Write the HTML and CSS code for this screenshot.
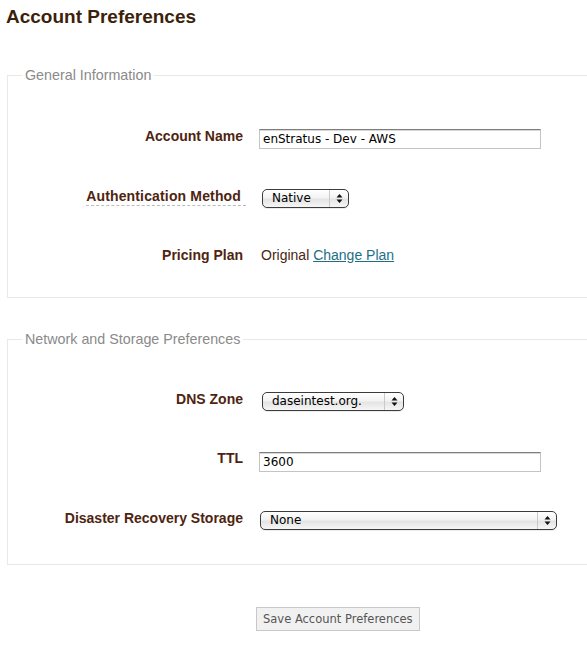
FILE: index.html
```html
<!DOCTYPE html>
<html>
<head>
<meta charset="utf-8">
<title>Account Preferences</title>
<link rel="stylesheet" href="styles.css">
</head>
<body>
<div class="page">
  <h1 class="title">Account Preferences</h1>

  <fieldset class="group">
    <legend class="group-legend">General Information</legend>
    <div class="rows">
      <div class="row">
        <label class="label">Account Name</label>
        <div class="control"><input class="text-input" type="text" value="enStratus - Dev - AWS"></div>
      </div>
      <div class="row">
        <label class="label"><span class="abbr">Authentication Method</span></label>
        <div class="control">
          <span class="select select-auth"><span class="select-value">Native</span><span class="select-arrows"><svg width="7" height="11" viewBox="0 0 7 11"><path d="M3.5 1 L6.5 4.5 L0.5 4.5 Z M3.5 10 L6.5 6.5 L0.5 6.5 Z" fill="#111"/></svg></span></span>
        </div>
      </div>
      <div class="row">
        <label class="label">Pricing Plan</label>
        <div class="plain">Original <a class="link" href="#">Change Plan</a></div>
      </div>
    </div>
  </fieldset>

  <fieldset class="group group-second">
    <legend class="group-legend">Network and Storage Preferences</legend>
    <div class="rows">
      <div class="row">
        <label class="label">DNS Zone</label>
        <div class="control">
          <span class="select select-dns"><span class="select-value">daseintest.org.</span><span class="select-arrows"><svg width="7" height="11" viewBox="0 0 7 11"><path d="M3.5 1 L6.5 4.5 L0.5 4.5 Z M3.5 10 L6.5 6.5 L0.5 6.5 Z" fill="#111"/></svg></span></span>
        </div>
      </div>
      <div class="row">
        <label class="label">TTL</label>
        <div class="control"><input class="text-input" type="text" value="3600"></div>
      </div>
      <div class="row">
        <label class="label">Disaster Recovery Storage</label>
        <div class="control">
          <span class="select select-dr"><span class="select-value">None</span><span class="select-arrows"><svg width="7" height="11" viewBox="0 0 7 11"><path d="M3.5 1 L6.5 4.5 L0.5 4.5 Z M3.5 10 L6.5 6.5 L0.5 6.5 Z" fill="#111"/></svg></span></span>
        </div>
      </div>
    </div>
  </fieldset>

  <div class="actions">
    <button class="button" type="button">Save Account Preferences</button>
  </div>
</div>
</body>
</html>
```

FILE: styles.css
```css
html, body {
  margin: 0;
  padding: 0;
  background: #fff;
}
body {
  font-family: "Liberation Sans", Arial, sans-serif;
  color: #4a2511;
}
.page {
  padding: 6px 0 0 6px;
}
.title {
  margin: 0;
  font-size: 19px;
  line-height: 22px;
  font-weight: bold;
  color: #3e1f0b;
}
.group {
  margin: 39px 0 0 1px;
  padding: 0 0 32px 14px;
  border: 1px solid #e8e8e8;
  border-right: none;
  min-width: 0;
}
.group-second {
  margin-top: 33px;
  padding-bottom: 36px;
}
.group-legend {
  padding: 0 3px;
  font-size: 14.3px;
  line-height: 17px;
  color: #8a8a8a;
}
.rows {
  display: flex;
  flex-direction: column;
  gap: 39.5px;
  padding-top: 42px;
}
.group-second .rows {
  padding-top: 41px;
}
.row {
  display: grid;
  grid-template-columns: 221px 1fr;
  grid-template-rows: 20px;
  column-gap: 16px;
  align-items: start;
  height: 20px;
}
.label {
  margin-top: 1.5px;
  text-align: right;
  font-size: 14px;
  line-height: 17px;
  font-weight: bold;
  color: #4e2410;
}
.abbr {
  display: inline-block;
  border-bottom: 1px dashed #bbb;
  padding-right: 5px;
  margin-right: -3px;
  line-height: 18px;
  letter-spacing: 0.15px;
}
.control {
  display: flex;
  align-items: flex-start;
  padding-top: 3px;
}
.plain {
  margin-top: 1.5px;
  font-size: 14px;
  line-height: 17px;
  color: #4a2511;
  padding-left: 2px;
  white-space: pre;
}
.link {
  color: #1d6f86;
  text-decoration: underline;
}
.text-input {
  box-sizing: border-box;
  width: 282px;
  height: 20px;
  margin: 0;
  padding: 0 3px;
  border: 1px solid #c4c4c4;
  border-top-color: #7d7d7d;
  box-shadow: inset 0 1px 0 #d8d8d8;
  font-family: "DejaVu Sans", "Lucida Grande", sans-serif;
  font-size: 12px;
  color: #000;
  background: #fff;
  outline: none;
}
.select {
  box-sizing: border-box;
  display: inline-flex;
  align-items: center;
  height: 19px;
  margin: 0 0 0 3px;
  border: 1px solid #3c3c3c;
  border-radius: 5px;
  background: linear-gradient(#ffffff 0%, #f3f3f3 45%, #e4e4e4 55%, #f6f6f6 100%);
  box-shadow: 0 1px 0 rgba(0,0,0,0.08);
  font-family: "DejaVu Sans", "Lucida Grande", sans-serif;
  font-size: 12px;
  color: #000;
}
.select-auth { width: 87px; }
.select-dns { width: 142px; }
.select-dr { width: 297px; margin-left: 1px; }
.select-value {
  flex: 1;
  padding-left: 9px;
  line-height: 17px;
}
.select-arrows {
  box-sizing: border-box;
  width: 19px;
  height: 17px;
  border-left: 1px solid #c9c9c9;
  display: flex;
  align-items: center;
  justify-content: center;
}
.actions {
  margin-top: 42px;
  padding-left: 250px;
}
.button {
  box-sizing: border-box;
  height: 24px;
  padding: 0 6px;
  border: 1px solid #c8c8c8;
  background: #f1f1f1;
  font-family: "DejaVu Sans", "Lucida Grande", sans-serif;
  font-size: 11.5px;
  color: #555;
}
```
